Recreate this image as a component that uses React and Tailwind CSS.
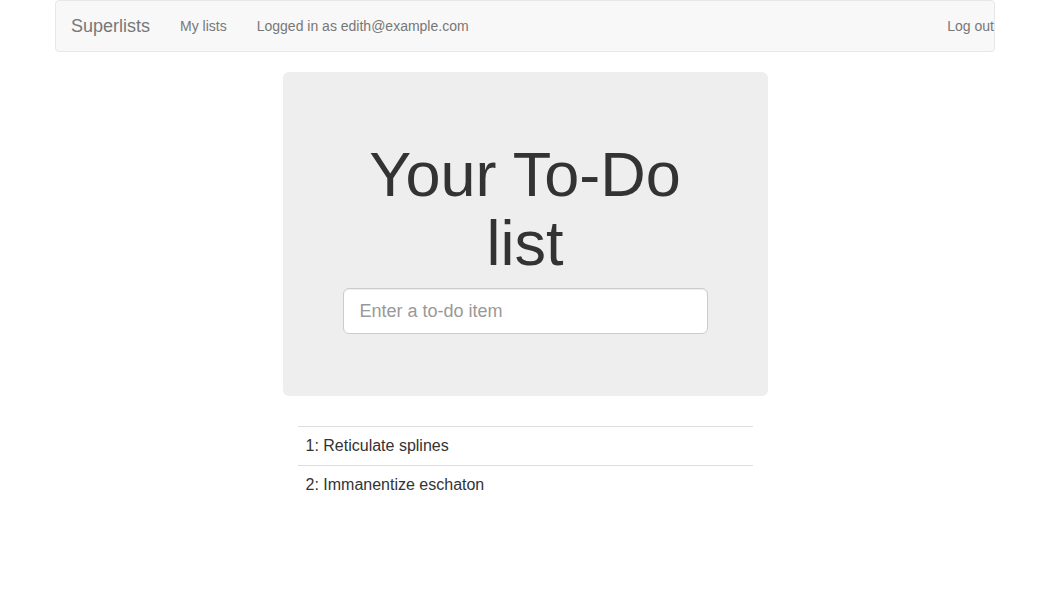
export default function App() {
  return (
    <div className="min-h-[611px] bg-white text-[#333] text-[14px] leading-[20px]" style={{ fontFamily: '"Liberation Sans", Arial, sans-serif' }}>
      <div className="mx-auto w-[970px] px-[15px]">
        <nav className="h-[52px] flex items-stretch justify-between rounded-[4px] border border-[#e7e7e7] bg-[#f8f8f8]">
          <div className="flex items-stretch">
            <a className="px-[15px] py-[15px] text-[18px] leading-[20px] text-[#777]">Superlists</a>
            <a className="px-[15px] py-[15px] text-[#777]">My lists</a>
            <span className="px-[15px] py-[15px] text-[#777]">Logged in as edith@example.com</span>
          </div>
          <a className="py-[15px] pl-[15px] text-[#777]">Log out</a>
        </nav>
        <div className="mt-[20px] mx-auto w-[485px]">
          <div className="rounded-[6px] bg-[#eeeeee] px-[60px] pt-[48px] pb-[62px]">
            <h1 className="mt-[20px] mb-[10px] text-center text-[63px] leading-[69px] text-[#333] font-normal">Your To-Do list</h1>
            <input
              placeholder="Enter a to-do item"
              className="block w-full h-[46px] rounded-[6px] border border-[#ccc] bg-white px-[16px] py-[10px] text-[18px] leading-[1.33] text-[#555] placeholder:text-[#999] shadow-[inset_0_1px_1px_rgba(0,0,0,0.075)] outline-none"
            />
          </div>
          <div className="mt-[30px] px-[15px]">
            <table className="w-full border-collapse text-[16px] leading-[22px]">
              <tbody>
                <tr>
                  <td className="border-t border-[#ddd] p-[8px]">1: Reticulate splines</td>
                </tr>
                <tr>
                  <td className="border-t border-[#ddd] p-[8px]">2: Immanentize eschaton</td>
                </tr>
              </tbody>
            </table>
          </div>
        </div>
      </div>
    </div>
  );
}
